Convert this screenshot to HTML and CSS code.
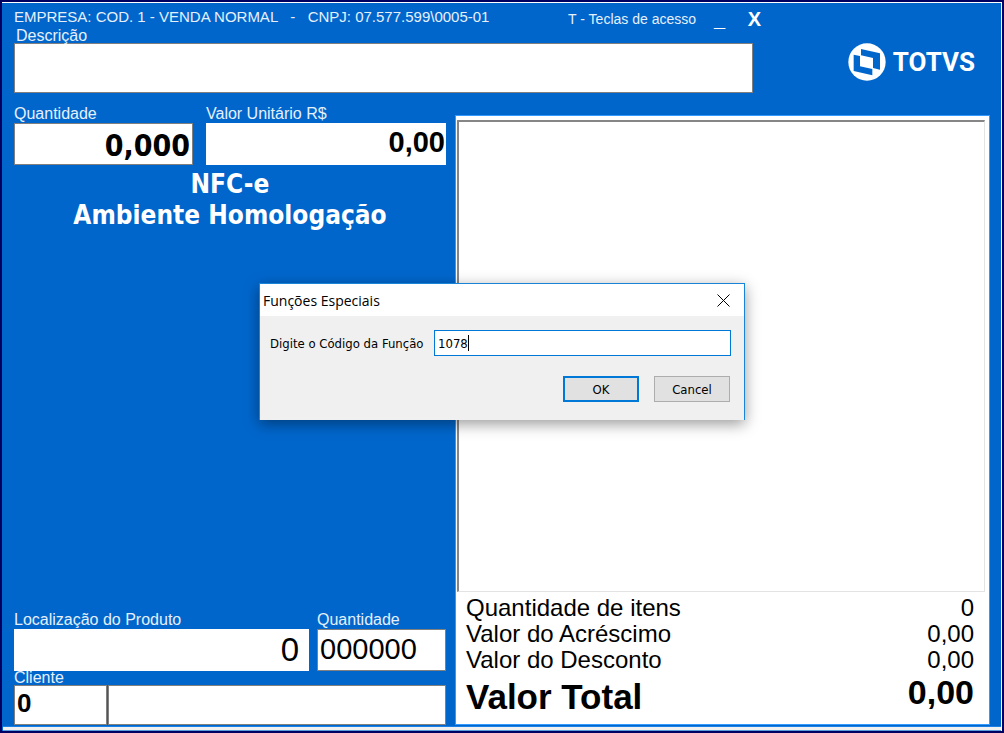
FILE: index.html
```html
<!DOCTYPE html>
<html lang="pt-BR">
<head>
<meta charset="UTF-8" />
<meta name="viewport" content="width=device-width, initial-scale=1" />
<title>TOTVS - Venda</title>
<link rel="stylesheet" href="styles.css">
</head>
<body>

<div class="window">
  <div class="screen">

    <header class="top">
      <div class="top-main">
        <div class="titlebar">
          <span class="company">EMPRESA: COD. 1 - VENDA NORMAL &nbsp; - &nbsp; CNPJ: 07.577.599\0005-01</span>
          <div class="window-actions">
            <span class="hint">T - Teclas de acesso</span>
            <button type="button" class="win-btn">_</button>
            <button type="button" class="win-btn">X</button>
          </div>
        </div>
        <div class="description">
          <label for="descricao">Descrição</label>
          <input type="text" id="descricao" class="box" />
        </div>
      </div>
      <div class="logo">
        <svg width="38" height="38" viewBox="0 0 114 114" aria-hidden="true">
          <circle cx="57" cy="57" r="56" fill="#fff" />
          <path d="M39 18 L96 31 V80 L75 75 V45 L39 37 Z" fill="#0066cc" />
          <path d="M17 35 L36 39 V70 L73 78 V97 L17 84 Z" fill="#0066cc" />
        </svg>
        <span>TOTVS</span>
      </div>
    </header>

    <main class="main">
      <section class="left">
        <div class="row price-row">
          <div class="field">
            <label for="qtd">Quantidade</label>
            <input type="text" id="qtd" class="box qty" value="0,000" />
          </div>
          <div class="field">
            <label for="unitario">Valor Unitário R$</label>
            <input type="text" id="unitario" class="box flat unit" value="0,00" />
          </div>
        </div>

        <div class="environment">NFC-e<br>Ambiente Homologação</div>

        <div class="row stock-row">
          <div class="field">
            <label for="local">Localização do Produto</label>
            <input type="text" id="local" class="box flat location" value="0" />
          </div>
          <div class="field">
            <label for="qtd2">Quantidade</label>
            <input type="text" id="qtd2" class="box stock" value="000000" />
          </div>
        </div>

        <div class="client">
          <label for="cliente">Cliente</label>
          <div class="row client-row">
            <input type="text" id="cliente" class="box code" value="0" />
            <input type="text" class="box" aria-label="Nome do cliente" />
          </div>
        </div>
      </section>

      <section class="receipt">
        <div class="items"></div>
        <dl class="totals">
          <div><dt>Quantidade de itens</dt><dd>0</dd></div>
          <div><dt>Valor do Acréscimo</dt><dd>0,00</dd></div>
          <div><dt>Valor do Desconto</dt><dd>0,00</dd></div>
          <div class="total"><dt>Valor Total</dt><dd>0,00</dd></div>
        </dl>
      </section>
    </main>

    <footer class="statusbar"></footer>
  </div>
</div>

<!-- Special functions dialog -->
<div class="overlay">
  <form class="dialog" role="dialog" aria-labelledby="dialogTitle">
    <div class="dialog-title">
      <span id="dialogTitle">Funções Especiais</span>
      <button type="button" class="close" aria-label="Fechar">
        <svg width="13" height="13" viewBox="0 0 13 13"><path d="M0.5 0.5 L12.5 12.5 M12.5 0.5 L0.5 12.5" stroke="#000" fill="none" /></svg>
      </button>
    </div>
    <div class="dialog-body">
      <div class="code-row">
        <label for="codigo">Digite o Código da Função</label>
        <div class="code-input">
          <input type="text" id="codigo" value="1078" />
          <span class="caret"></span>
        </div>
      </div>
      <div class="dialog-buttons">
        <button type="button" class="default">OK</button>
        <button type="button">Cancel</button>
      </div>
    </div>
  </form>
</div>

</body>
</html>
```
FILE: styles.css
```css
* {
  box-sizing: border-box;
}
body {
  margin: 0;
  font-family: "Liberation Sans", Arial, sans-serif;
  font-size: 16px;
  color: #000;
}
input, button {
  font-family: inherit;
  margin: 0;
}
.window {
  min-height: 100vh;
  display: flex;
  border: 2px solid #000060;
}
.screen {
  flex: 1;
  display: flex;
  flex-direction: column;
  background: #0066cc;
  border-top: 1px solid #fff;
  border-right: 1px solid #fff;
}

/* Header */
.top {
  display: grid;
  grid-template-columns: 1fr 215px;
  padding: 0 11px 0 12px;
  color: #e6f0fa;
}
.titlebar {
  display: flex;
  justify-content: space-between;
  height: 26px;
  line-height: 28px;
  font-size: 15px;
  white-space: nowrap;
}
.window-actions {
  display: flex;
  align-items: center;
  padding: 6px 14px 0 0;
}
.hint {
  font-size: 14px;
}
.win-btn {
  width: 36px;
  padding: 0;
  border: none;
  background: none;
  color: #fff;
  font-size: 20px;
  font-weight: bold;
  line-height: 26px;
  text-align: right;
}
.win-btn:first-of-type {
  width: 29px;
}
.description {
  padding-right: 22px;
}
.description label {
  display: block;
  padding-left: 2px;
  line-height: 14px;
}
.description .box {
  height: 50px;
}
.logo {
  display: flex;
  align-items: center;
  justify-content: flex-end;
  gap: 7px;
  padding: 27px 15px 0 0;
  color: #fff;
  font-family: Roboto, sans-serif;
  font-size: 26px;
  font-weight: bold;
}

/* Text boxes */
.box {
  display: block;
  width: 100%;
  height: 42px;
  padding: 0 2px;
  border: 1px solid #808080;
  border-radius: 0;
  background: #fff;
  color: #000;
}
.box.flat {
  border-color: #fff;
}
.qty {
  padding-top: 3px;
  font-family: "DejaVu Sans Condensed", "DejaVu Sans", sans-serif;
  font-size: 30px;
  font-weight: bold;
  text-align: right;
}
.unit {
  padding: 0 0 4px;
  font-size: 29px;
  font-weight: bold;
  text-align: right;
}
.location {
  padding-right: 9px;
  font-size: 33px;
  text-align: right;
}
.stock {
  padding-bottom: 2px;
  font-size: 29px;
}
.code {
  padding-bottom: 3px;
  font-size: 26px;
  font-weight: bold;
}

/* Main area */
.main {
  flex: 1;
  display: grid;
  grid-template-columns: 432px 1fr;
  gap: 9px;
  padding: 0 11px 1px 12px;
}
.left {
  display: flex;
  flex-direction: column;
  padding-top: 12px;
  color: #e6f0fa;
}
.row {
  display: grid;
}
.price-row {
  grid-template-columns: 179px 1fr;
  gap: 13px;
}
.stock-row {
  grid-template-columns: 1fr 129px;
  gap: 8px;
  margin-top: auto;
}
.client-row {
  grid-template-columns: 93px 1fr;
  gap: 1px;
}
.field label {
  display: block;
  line-height: 18px;
}
.environment {
  padding-top: 4px;
  color: #fff;
  font-family: "DejaVu Sans Condensed", "DejaVu Sans", sans-serif;
  font-size: 26px;
  font-weight: bold;
  line-height: 31px;
  text-align: center;
}
.client label {
  display: block;
  line-height: 14px;
}
.client .box {
  height: 40px;
}

/* Receipt */
.receipt {
  display: flex;
  flex-direction: column;
  margin-top: 22px;
  padding: 4px 4px 7px 1px;
  background: #fff;
  border: 1px solid #3399ff;
}
.items {
  flex: 1;
  border: 2px solid #868686;
  border-right: 1px solid #e3e3e3;
  border-bottom: 1px solid #e3e3e3;
}
.totals {
  margin: 0;
  padding: 3px 11px 0 9px;
  font-size: 24px;
}
.totals div {
  display: flex;
  justify-content: space-between;
  line-height: 26px;
}
.totals dd {
  margin: 0;
}
.totals .total {
  padding-top: 4px;
  font-size: 34px;
  font-weight: bold;
  line-height: 40px;
}
.total dt {
  font-size: 35px;
}
.total dd {
  margin-top: -5px;
}
.statusbar {
  height: 5px;
  margin-left: 1px;
  background: #f0f0f0;
  border-top: 1px solid #1a80e6;
  border-bottom: 1px solid #5a9bdc;
}

/* Dialog */
.overlay {
  position: absolute;
  inset: 0;
  display: flex;
  align-items: center;
  justify-content: center;
  padding-bottom: 30px;
}
.dialog {
  width: 486px;
  background: #f0f0f0;
  border: 1px solid #1883d7;
  border-bottom: none;
  box-shadow: 0 4px 14px rgba(0, 0, 0, 0.4);
}
.dialog-title {
  display: flex;
  align-items: center;
  justify-content: space-between;
  height: 32px;
  padding: 0 14px 0 3px;
  background: #fff;
  font-family: "Open Sans", "Noto Sans", sans-serif;
  font-size: 14px;
}
.close {
  display: flex;
  padding: 0;
  border: none;
  background: none;
}
.dialog-body {
  padding: 14px 13px 18px 10px;
  font-family: "DejaVu Sans Condensed", "DejaVu Sans", sans-serif;
  font-size: 13px;
}
.code-row {
  display: flex;
  align-items: center;
  justify-content: space-between;
}
.code-row label {
  white-space: nowrap;
}
.code-input {
  position: relative;
  width: 297px;
}
.code-input input {
  display: block;
  width: 100%;
  height: 26px;
  padding: 0 3px;
  border: 1px solid #0078d7;
  font-size: 13px;
}
.caret {
  position: absolute;
  top: 5px;
  left: 34px;
  width: 1px;
  height: 16px;
  background: #000;
}
.dialog-buttons {
  display: flex;
  justify-content: flex-end;
  gap: 15px;
  padding: 20px 1px 0 0;
}
.dialog-buttons button {
  width: 76px;
  height: 26px;
  padding: 0;
  border: 1px solid #adadad;
  background: #e1e1e1;
  color: #000;
  font-size: 13px;
}
.dialog-buttons .default {
  border: 2px solid #0078d7;
}
```
